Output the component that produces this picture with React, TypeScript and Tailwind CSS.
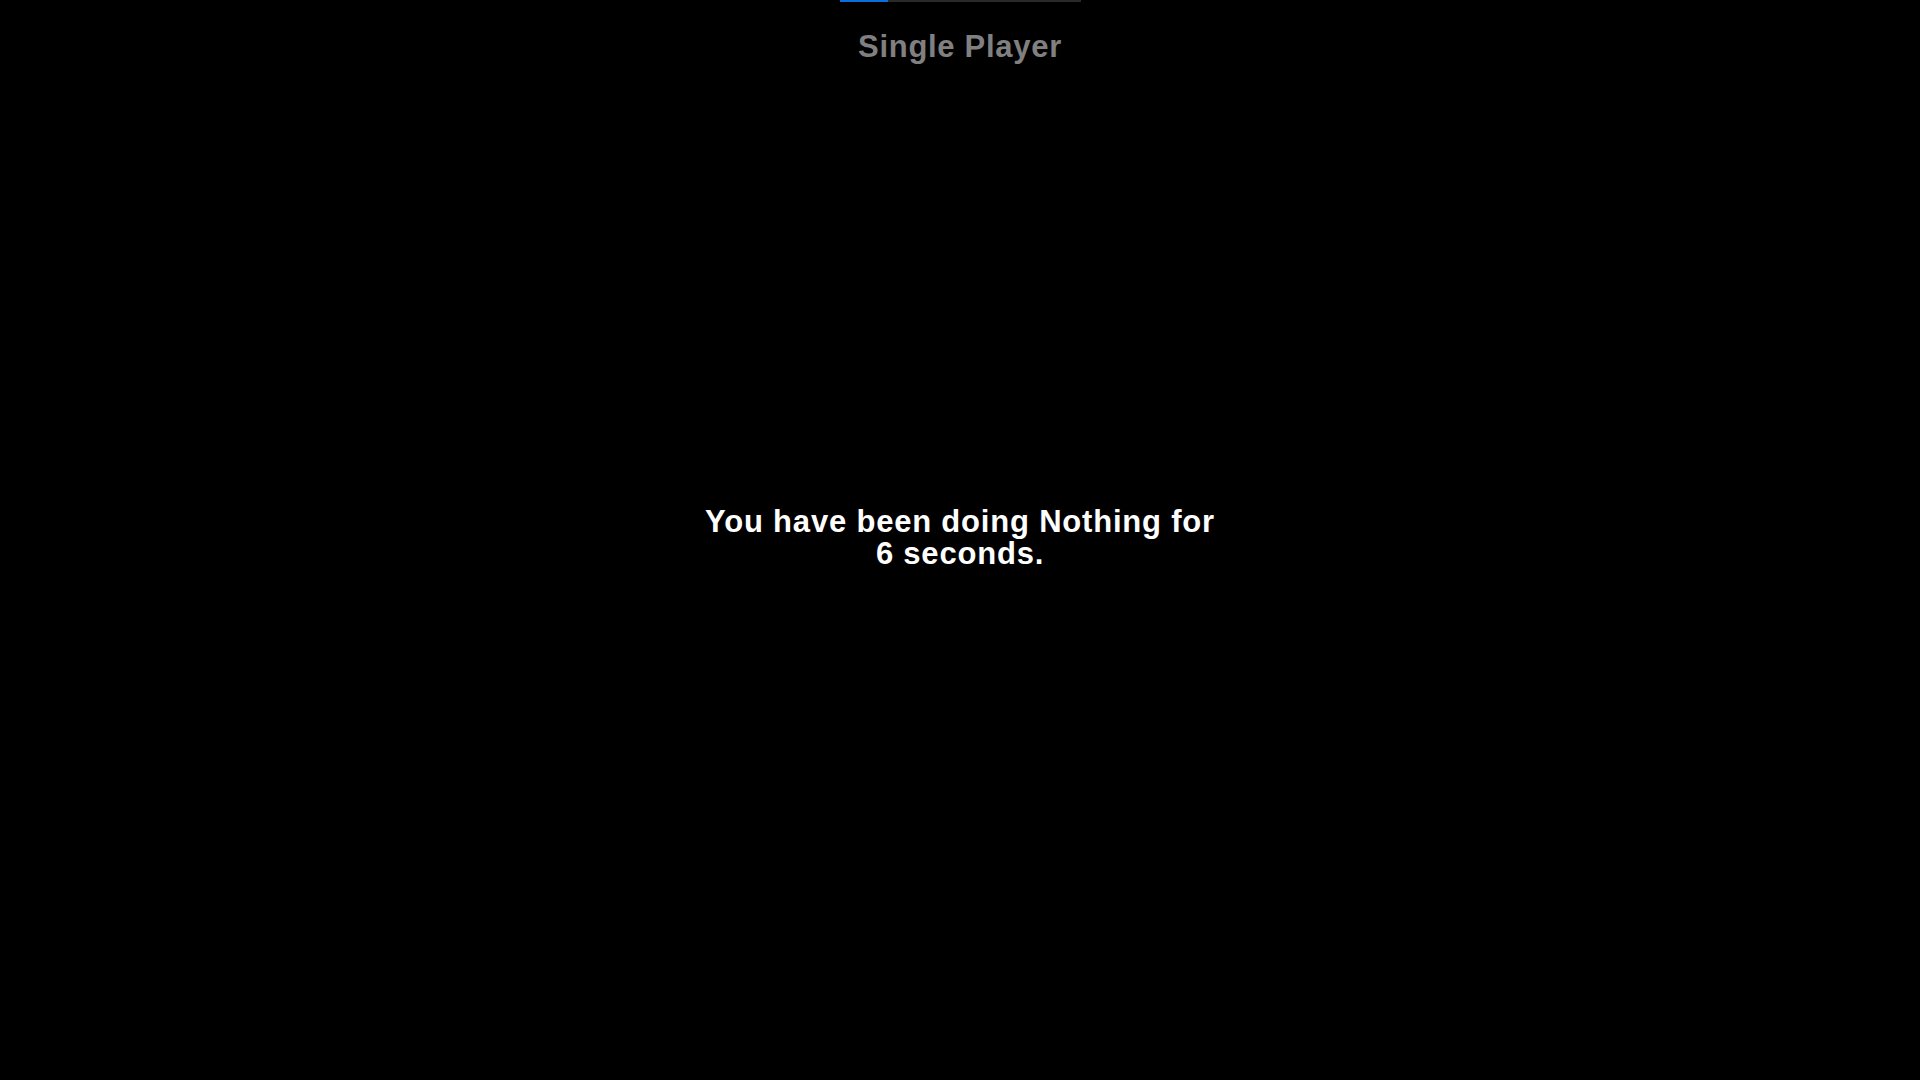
import React from "react";

export default function App() {
  return (
    <div
      className="relative flex h-[1080px] w-[1920px] flex-col items-center overflow-hidden bg-black"
      style={{ fontFamily: '"Liberation Sans", Arial, sans-serif' }}
    >
      <div className="flex h-[2px] w-[241px] bg-[#2a2a2a]">
        <div className="h-full w-[48px] bg-[#0a6fdc]" />
      </div>
      <h1 className="mt-[27px] text-[31px] font-bold leading-[36px] tracking-[0.7px] text-[#808080]">
        Single Player
      </h1>
      <div className="flex flex-1 items-center justify-center pb-[70px]">
        <p className="w-[530px] text-center text-[31px] font-bold leading-[32px] tracking-[0.8px] text-white">
          You have been doing Nothing for 6 seconds.
        </p>
      </div>
    </div>
  );
}
